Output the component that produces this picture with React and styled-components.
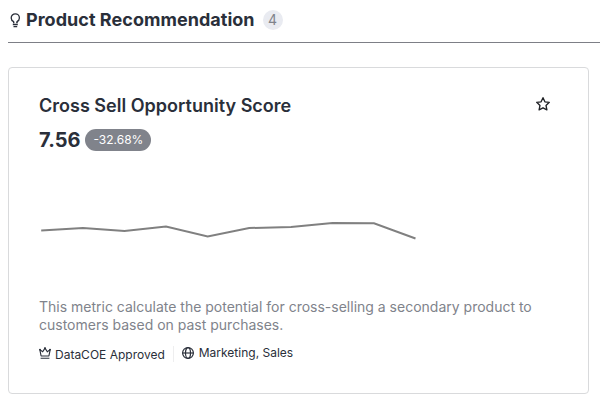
import React from "react";
import styled, { createGlobalStyle } from "styled-components";

const GlobalStyle = createGlobalStyle`
  * { box-sizing: border-box; }
  body { margin: 0; background: #fff; color: #2a2f3a; font-family: Inter, sans-serif; overflow: hidden; }
  h2, h3, p { margin: 0; }
  svg { display: block; flex: none; }
`;
const Page = styled.main`
  height: 404px;
  padding-left: 8px;
  overflow: hidden;
`;
const SectionHeader = styled.header`
  display: flex;
  align-items: flex-start;
  height: 43px;
  padding-top: 9px;
  border-bottom: 1px solid #7d7f86;
`;
const HeaderIcon = styled.span`
  width: 18px;
  padding: 4px 0 0 2px;
`;
const SectionTitle = styled.h2`
  font-size: 18px;
  line-height: 22px;
  font-weight: 700;
  letter-spacing: 0.035px;
  white-space: nowrap;
`;
const Count = styled.span`
  display: flex;
  align-items: center;
  justify-content: center;
  width: 20px;
  height: 20px;
  margin: 1px 0 0 8px;
  border-radius: 50%;
  background: #e9ebf1;
  color: #80838b;
  font-size: 14px;
  line-height: 20px;
`;
const Card = styled.article`
  display: flex;
  flex-direction: column;
  width: 581px;
  height: 327px;
  margin-top: 24px;
  padding: 27px 30px 0;
  border: 1px solid #d9dadc;
  border-radius: 4px;
`;
const CardHeader = styled.div`
  display: flex;
  justify-content: space-between;
  height: 32px;
`;
const CardTitle = styled.h3`
  font-size: 18px;
  line-height: 22px;
  font-weight: 600;
  letter-spacing: 0.015px;
`;
const StarButton = styled.button`
  width: 16px;
  height: 16px;
  margin: 1px 7px 0 0;
  padding: 0;
  border: 0;
  background: none;
  color: #202226;
`;
const ScoreRow = styled.div`
  display: flex;
  align-items: center;
  gap: 5px;
  height: 26px;
`;
const Score = styled.strong`
  font-size: 20px;
  line-height: 24px;
  font-weight: 700;
`;
const Change = styled.span`
  height: 22px;
  padding: 0 8px;
  border-radius: 11px;
  background: #80838b;
  color: #fff;
  font-size: 12px;
  line-height: 22px;
`;
const Chart = styled.div`
  height: 145px;
`;
const Description = styled.p`
  color: #80838b;
  font-size: 14px;
  line-height: 18px;
`;
const MetaRow = styled.div`
  display: flex;
  margin-top: 11px;
  height: 18px;
  font-size: 12px;
  line-height: 16px;
`;
const Meta = styled.span`
  display: flex;
  gap: ${({ $gap }) => $gap};
  padding-top: ${({ $top }) => $top};
`;
const Divider = styled.span`
  width: 1px;
  height: 16px;
  margin: 1px 8px 0;
  background: #eeeeef;
`;
const IconOffset = styled.span`
  padding-top: ${({ $top }) => $top};
`;

const Bulb = () => (
  <svg width="11" height="15" viewBox="0 0 11 15" fill="none" stroke="currentColor" strokeWidth="1.3">
    <path d="M3.6 9.8V8.6C2.2 7.9 1.2 6.6 1.2 4.9a4.1 4.1 0 0 1 8.2 0c0 1.7-1 3-2.4 3.7v1.2" />
    <path d="M3 9.6h1.3M6.3 9.6h1.3M2.8 11.5h5M3.5 13.6h3.7" />
  </svg>
);
const Star = () => (
  <svg width="16" height="16" viewBox="0 0 16 16" fill="none" stroke="currentColor" strokeWidth="1.35" strokeLinejoin="round">
    <path d="m8 1.7 1.9 4.1 4.4.5-3.3 3.1.9 4.5L8 11.8l-3.9 2.1.9-4.5-3.3-3.1 4.4-.5Z" />
  </svg>
);
const Crown = () => (
  <svg width="12" height="12" viewBox="0 0 12 12" fill="none" stroke="currentColor" strokeWidth="1.15" strokeLinejoin="round">
    <path d="m.8 2.6 1.3 6.4h7.8l1.3-6.4-2.9 2.2L6 1.1 3.7 4.8ZM1.6 11.2h8.8" />
    <g fill="currentColor" stroke="none">
      <circle cx="6" cy="1.2" r="1" />
      <circle cx="1" cy="2.6" r="0.9" />
      <circle cx="11" cy="2.6" r="0.9" />
    </g>
  </svg>
);
const Globe = () => (
  <svg width="12" height="12" viewBox="0 0 12 12" fill="none" stroke="currentColor" strokeWidth="1.2">
    <circle cx="6" cy="6" r="5.4" />
    <ellipse cx="6" cy="6" rx="2.5" ry="5.4" />
    <path d="M.6 6h10.8" />
  </svg>
);

export default function App() {
  return (
    <Page>
      <GlobalStyle />
      <SectionHeader>
        <HeaderIcon><Bulb /></HeaderIcon>
        <SectionTitle>Product Recommendation</SectionTitle>
        <Count>4</Count>
      </SectionHeader>
      <Card>
        <CardHeader>
          <CardTitle>Cross Sell Opportunity Score</CardTitle>
          <StarButton aria-label="Favorite"><Star /></StarButton>
        </CardHeader>
        <ScoreRow>
          <Score>7.56</Score>
          <Change>-32.68%</Change>
        </ScoreRow>
        <Chart>
          <svg width="380" height="145" viewBox="0 0 380 145" fill="none" stroke="#808080" strokeWidth="2">
            <polyline points="2.2,77.5 44,75 85.5,78 127,73.5 168.7,83.5 210.2,75 252,74 293.5,70 335,70.3 376.5,85.5" />
          </svg>
        </Chart>
        <Description>
          This metric calculate the potential for cross-selling a secondary product to customers based on past purchases.
        </Description>
        <MetaRow>
          <Meta $gap="4px" $top="2px">
            <IconOffset $top="0px"><Crown /></IconOffset>
            DataCOE Approved
          </Meta>
          <Divider />
          <Meta $gap="5px" $top="0px">
            <IconOffset $top="2px"><Globe /></IconOffset>
            Marketing, Sales
          </Meta>
        </MetaRow>
      </Card>
    </Page>
  );
}
